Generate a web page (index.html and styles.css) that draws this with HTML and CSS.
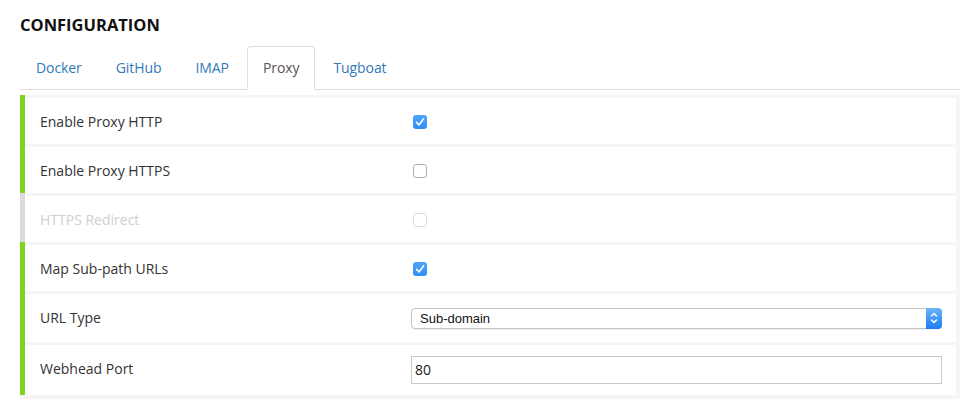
FILE: index.html
```html
<!DOCTYPE html>
<html>
<head>
<meta charset="utf-8">
<link rel="stylesheet" href="styles.css">
</head>
<body>
<div class="page">
  <h1 class="title">CONFIGURATION</h1>
  <ul class="tabs">
    <li class="tab">Docker</li>
    <li class="tab">GitHub</li>
    <li class="tab">IMAP</li>
    <li class="tab active">Proxy</li>
    <li class="tab">Tugboat</li>
  </ul>
  <div class="panel">
    <div class="row on">
      <div class="row-body">
        <div class="label">Enable Proxy HTTP</div>
        <div class="value"><span class="cb checked"><svg viewBox="0 0 14 14" width="14" height="14"><path d="M3.6 7.4 L6 10 L10.6 3.8" fill="none" stroke="#fff" stroke-width="1.6" stroke-linecap="round" stroke-linejoin="round"/></svg></span></div>
      </div>
    </div>
    <div class="row on">
      <div class="row-body">
        <div class="label">Enable Proxy HTTPS</div>
        <div class="value"><span class="cb"></span></div>
      </div>
    </div>
    <div class="row off">
      <div class="row-body">
        <div class="label disabled">HTTPS Redirect</div>
        <div class="value"><span class="cb dis"></span></div>
      </div>
    </div>
    <div class="row on">
      <div class="row-body">
        <div class="label">Map Sub-path URLs</div>
        <div class="value"><span class="cb checked"><svg viewBox="0 0 14 14" width="14" height="14"><path d="M3.6 7.4 L6 10 L10.6 3.8" fill="none" stroke="#fff" stroke-width="1.6" stroke-linecap="round" stroke-linejoin="round"/></svg></span></div>
      </div>
    </div>
    <div class="row on">
      <div class="row-body h48">
        <div class="label">URL Type</div>
        <div class="value">
          <div class="select">
            <span class="select-text">Sub-domain</span>
            <span class="stepper"><svg viewBox="0 0 16 20" width="16" height="20"><path d="M5.5 8 L8 5.5 L10.5 8" fill="none" stroke="#fff" stroke-width="1.4" stroke-linecap="round" stroke-linejoin="round"/><path d="M5.5 12 L8 14.5 L10.5 12" fill="none" stroke="#fff" stroke-width="1.4" stroke-linecap="round" stroke-linejoin="round"/></svg></span>
          </div>
        </div>
      </div>
    </div>
    <div class="row on">
      <div class="row-body h50">
        <div class="label">Webhead Port</div>
        <div class="value"><div class="input">80</div></div>
      </div>
    </div>
  </div>
</div>
</body>
</html>
```
FILE: styles.css
```css
html, body {
  margin: 0;
  padding: 0;
  background: #fff;
}
body {
  font-family: "Open Sans", "Noto Sans", sans-serif;
  font-size: 14px;
  color: #333;
}
.page {
  padding: 0 20px;
}
.title {
  margin: 0;
  padding-top: 14px;
  font-size: 16.5px;
  line-height: 22px;
  font-weight: 700;
  color: #111;
  height: 32px;
}
.tabs {
  list-style: none;
  margin: 0;
  padding: 0;
  display: flex;
  border-bottom: 1px solid #ddd;
}
.tab {
  padding: 11px 15px;
  line-height: 20px;
  margin-right: 2px;
  margin-bottom: -1px;
  border: 1px solid transparent;
  border-radius: 4px 4px 0 0;
  color: #337ab7;
  letter-spacing: -0.08px;
}
.tab.active {
  color: #555;
  background: #fff;
  border-color: #ddd #ddd transparent #ddd;
}
.panel {
  margin-top: 5px;
  background: #f5f5f5;
  padding-bottom: 4px;
}
.row {
  border-left: 5px solid #7ed321;
  padding: 3px 4px 0 0;
}
.row.off {
  border-left-color: #dadada;
}
.row-body {
  background: #fff;
  height: 46px;
  display: grid;
  grid-template-columns: 371px 1fr;
  align-items: center;
  padding: 0 14px 0 15px;
}
.row-body.h48 { height: 48px; }
.row-body.h50 { height: 50px; }
.label {
  line-height: 20px;
  align-self: start;
  padding-top: 14px;
}
.label.disabled {
  color: #cfcfcf;
}
.value {
  display: flex;
  align-items: center;
}
.cb {
  display: block;
  width: 14px;
  height: 14px;
  box-sizing: border-box;
  border: 1px solid #acacac;
  border-radius: 3px;
  background: #fff;
  margin-left: 2px;
  margin-top: 1px;
}
.cb.dis {
  border-color: #dcdcdc;
}
.cb.checked {
  border: none;
  background: linear-gradient(#4ea5fd, #2f8ef5);
}
.cb svg {
  display: block;
}
.select {
  flex: 1;
  height: 21px;
  box-sizing: border-box;
  border: 1px solid #c3c3c3;
  border-radius: 4px;
  display: flex;
  align-items: center;
  background: #fff;
  box-shadow: 0 1px 0 rgba(0,0,0,0.05);
}
.select-text {
  flex: 1;
  font-family: "Liberation Sans", Arial, sans-serif;
  font-size: 13px;
  color: #111;
  padding-left: 8px;
}
.stepper {
  width: 16px;
  height: 21px;
  margin: -1px -1px -1px 0;
  border-radius: 0 4px 4px 0;
  background: linear-gradient(#6cb3fa, #1b7df2);
  display: flex;
  align-items: center;
  justify-content: center;
}
.stepper svg {
  display: block;
}
.input {
  flex: 1;
  height: 28px;
  box-sizing: border-box;
  border: 1px solid #c8c8c8;
  padding: 0 3px;
  line-height: 26px;
  font-size: 14px;
  color: #222;
}
```
